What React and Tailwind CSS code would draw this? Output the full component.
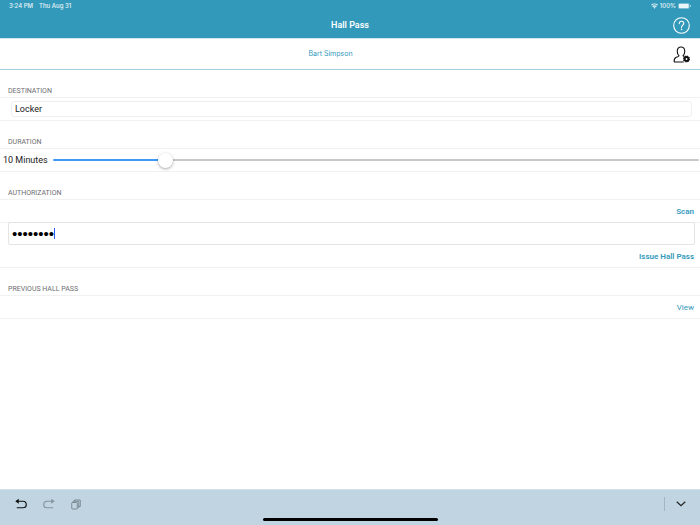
import React, { useState } from 'react';

const MAX_MINUTES = 60;

const StatusBar = () => (
    <div className="flex items-center justify-between h-3 px-[9px] font-['Inter','Liberation_Sans',sans-serif] text-[6px] leading-3 font-medium text-white/90">
        <div className="flex gap-[6px]">
            <span>3:24 PM</span>
            <span>Thu Aug 31</span>
        </div>
        <div className="flex items-center gap-[2px]">
            <svg viewBox="0 0 16 12" className="w-[7px] h-[6px]" fill="none" stroke="currentColor" strokeWidth="2.6">
                <path d="M1 4.2a10 10 0 0 1 14 0" />
                <path d="M3.6 7.4a6.2 6.2 0 0 1 8.8 0" />
                <path d="M8 12 5.6 9.6a3.4 3.4 0 0 1 4.8 0z" fill="currentColor" stroke="none" />
            </svg>
            <span>100%</span>
            <svg viewBox="0 0 26 12" className="w-[13px] h-[6px]" fill="none">
                <rect x="0.5" y="0.5" width="22" height="11" rx="3" stroke="currentColor" strokeOpacity="0.5" />
                <rect x="1.5" y="1.5" width="20" height="9" rx="2" fill="currentColor" />
                <path d="M24 4v4c1-.3 1.5-1 1.5-2S25 4.3 24 4z" fill="currentColor" />
            </svg>
        </div>
    </div>
);

const HelpIcon = () => (
    <svg viewBox="0 0 34 34" className="w-[17px] h-[17px]" fill="none" stroke="white" strokeWidth="2.2">
        <circle cx="17" cy="17" r="15.6" />
        <path d="M12.5 13.2c0-2.9 2-4.7 4.6-4.7s4.5 1.7 4.5 4.2c0 3.7-4.5 3.8-4.5 8" strokeLinecap="round" />
        <circle cx="17.1" cy="24.8" r="1.6" fill="white" stroke="none" />
    </svg>
);

const UserSettingsIcon = () => (
    <svg viewBox="0 0 34 34" className="w-[17px] h-[17px]" fill="none" stroke="#111" strokeWidth="2.2">
        <path d="M21.5 32H2.5c-.6-4 .2-7.5 3.3-9 2.6-1.2 5.7-1.2 6.2-3.5-2.4-2.1-3.5-5.2-3.5-9 0-5 2.7-8.5 7.5-8.5s7.5 3.5 7.5 8.5c0 3.8-1.1 6.900-3.5 9l2 1.5" strokeLinejoin="round" />
        <circle cx="27" cy="26" r="3.8" strokeWidth="4" />
        <circle cx="27" cy="26" r="5.9" strokeWidth="2.2" strokeDasharray="2.6 2.03" />
    </svg>
);

const UndoIcon = () => (
    <svg viewBox="0 0 24 24" className="w-3 h-3" fill="none" stroke="currentColor" strokeWidth="2.4">
        <path d="M3 6.5h13a5.7 5.7 0 0 1 0 13H3.5" />
        <path d="M7.5 1.5v10L.5 6.5z" fill="currentColor" stroke="none" />
    </svg>
);

const PasteIcon = () => (
    <svg viewBox="0 0 20 22" className="w-[10px] h-[11px]" fill="none" stroke="currentColor" strokeWidth="1.8">
        <rect x="1.5" y="7" width="11" height="13" rx="1" />
        <path d="M4 6.5V4.5h11.5v13h-2M7 4V2h11.5v13h-3" />
    </svg>
);

const SectionTitle = ({ children }) => (
    <h2 className="flex items-end h-7 px-2 border-b border-[#f1f1f1] text-[7px] leading-[12px] text-[#6d6d72]">
        {children}
    </h2>
);

const ActionRow = ({ label, className }) => (
    <div className="flex items-start justify-end h-[23px] pt-[6px] px-[6px] border-b border-[#f1f1f1]">
        <button type="button" className={`text-[8px] leading-3 text-[#3299bb] ${className}`}>{label}</button>
    </div>
);

const App = () => {
    const [destination, setDestination] = useState('Locker');
    const [minutes, setMinutes] = useState(10);
    const [pin, setPin] = useState('12345678');

    const percent = (minutes / MAX_MINUTES) * 100;

    return (
        <div className="flex flex-col min-h-screen bg-white font-['Roboto','Liberation_Sans',sans-serif] text-[#222]">
            <header className="bg-[#3299bb]">
                <StatusBar />
                <div className="grid grid-cols-3 items-center h-[27px] px-[10px] border-b border-[#cfe6ef]">
                    <h1 className="col-start-2 text-center text-[9px] leading-3 font-semibold text-white">Hall Pass</h1>
                    <button type="button" aria-label="Help" className="justify-self-end"><HelpIcon /></button>
                </div>
            </header>

            <div className="flex items-center h-[31px] pr-[10px] border-b border-[#a5d0df]">
                <a href="#student" className="flex-1 text-center font-['Inter','Liberation_Sans',sans-serif] text-[7px] leading-3 text-[#3299bb]">Bart Simpson</a>
                <button type="button" aria-label="Student settings" className="ml-3"><UserSettingsIcon /></button>
            </div>

            <main className="flex-1">
                <section>
                    <SectionTitle>DESTINATION</SectionTitle>
                    <div className="flex items-center h-[23px] pl-[11px] pr-2 border-b border-[#f1f1f1]">
                        <input
                            type="text"
                            aria-label="Destination"
                            value={destination}
                            onChange={(e) => setDestination(e.target.value)}
                            className="w-full h-4 px-[3px] rounded-[3px] border border-[#efefef] text-[9px] leading-3 outline-none"
                        />
                    </div>
                </section>

                <section>
                    <SectionTitle>DURATION</SectionTitle>
                    <div className="flex items-center gap-[5px] h-[23px] pl-[3px] pr-[1px] border-b border-[#f1f1f1]">
                        <label htmlFor="duration" className="text-[9px] leading-3 whitespace-nowrap">{minutes} Minutes</label>
                        <input
                            id="duration"
                            type="range"
                            min="0"
                            max={MAX_MINUTES}
                            value={minutes}
                            onChange={(e) => setMinutes(Number(e.target.value))}
                            style={{ backgroundImage: `linear-gradient(to right, #3f97f6 ${percent}%, #c8c8ca ${percent}%)` }}
                            className="flex-1 min-w-0 h-[2px] rounded-full appearance-none outline-none [&::-webkit-slider-thumb]:appearance-none [&::-webkit-slider-thumb]:w-[15px] [&::-webkit-slider-thumb]:h-[15px] [&::-webkit-slider-thumb]:rounded-full [&::-webkit-slider-thumb]:bg-white [&::-webkit-slider-thumb]:shadow-[0_1px_3px_rgba(0,0,0,0.35)]"
                        />
                    </div>
                </section>

                <section>
                    <SectionTitle>AUTHORIZATION</SectionTitle>
                    <ActionRow label="Scan" className="font-semibold" />
                    <label className="flex items-center h-[23px] -mt-px ml-2 mr-[5px] px-[3px] rounded-[2px] border border-[#e4e4e4] cursor-text">
                        <input
                            type="password"
                            aria-label="Authorization PIN"
                            value={pin}
                            onChange={(e) => setPin(e.target.value)}
                            className="[field-sizing:content] font-['Liberation_Sans',sans-serif] text-[15px] leading-5 text-black caret-transparent outline-none"
                        />
                        <span className="w-px h-[11px] bg-[#2f5bff]" />
                    </label>
                    <ActionRow label="Issue Hall Pass" className="font-semibold" />
                </section>

                <section>
                    <SectionTitle>PREVIOUS HALL PASS</SectionTitle>
                    <ActionRow label="View" className="font-normal" />
                </section>
            </main>

            <footer className="h-9 bg-[#c0d5e1] border-t border-[#d0e0e8]">
                <div className="flex items-center h-7 pl-[15px] pr-[14px]">
                    <div className="flex items-center gap-4">
                        <button type="button" aria-label="Undo" className="text-[#111]"><UndoIcon /></button>
                        <button type="button" aria-label="Redo" className="text-[#84949d] -scale-x-100"><UndoIcon /></button>
                        <button type="button" aria-label="Paste" className="text-[#74838c]"><PasteIcon /></button>
                    </div>
                    <div className="flex items-center gap-[11px] ml-auto">
                        <span className="w-px h-[14px] bg-[#a3b5bf]" />
                        <button type="button" aria-label="Hide keyboard" className="text-[#222]">
                            <svg viewBox="0 0 20 12" className="w-[10px] h-[6px]" fill="none" stroke="currentColor" strokeWidth="2.4">
                                <path d="m1.5 1.5 8.5 8 8.5-8" />
                            </svg>
                        </button>
                    </div>
                </div>
                <div className="w-1/4 h-[3px] mx-auto rounded-full bg-black" />
            </footer>
        </div>
    );
};

export default App;
